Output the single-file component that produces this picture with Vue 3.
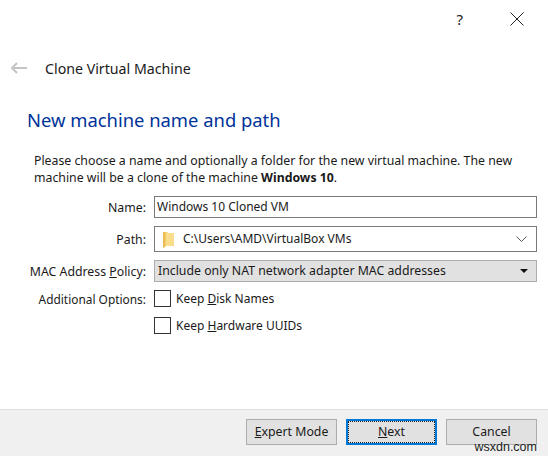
<script setup>
const name = 'Windows 10 Cloned VM'
const path = 'C:\\Users\\AMD\\VirtualBox VMs'
</script>

<template>
  <div class="dialog">
    <div class="titlebar">
      <span class="help">?</span>
      <svg class="close" width="14" height="14" viewBox="0 0 14 14">
        <path d="M0.5 0.5L13.5 13.5M13.5 0.5L0.5 13.5" stroke="#222" stroke-width="1" fill="none" />
      </svg>
    </div>

    <div class="header">
      <svg class="back" width="18" height="12" viewBox="0 0 18 12">
        <path d="M17 6H2M7 1L2 6L7 11" stroke="#c4c4c4" stroke-width="2" fill="none" />
      </svg>
      <span class="caption">Clone Virtual Machine</span>
    </div>

    <div class="content">
      <h1>New machine name and path</h1>
      <p class="intro">
        Please choose a name and optionally a folder for the new virtual machine. The new
        machine will be a clone of the machine <b>Windows 10</b>.
      </p>

      <div class="form">
        <label class="lbl">Name:</label>
        <div class="edit">{{ name }}</div>

        <label class="lbl">Path:</label>
        <div class="pathbox">
          <svg class="folder" width="14" height="17" viewBox="0 0 14 17">
            <path d="M1 1H5L6 2H12V15H4L1 17Z" fill="#f3cd6c" />
            <path d="M4 2H12V15H4Z" fill="#f9dc8c" />
            <path d="M1 1H3V16L1 17Z" fill="#e9bd52" />
          </svg>
          <span class="pathtext">{{ path }}</span>
          <svg class="chev" width="11" height="6" viewBox="0 0 11 6">
            <path d="M0.5 0.5L5.5 5.5L10.5 0.5" stroke="#555" fill="none" />
          </svg>
        </div>

        <label class="lbl">MAC Address <u>P</u>olicy:</label>
        <div class="combo">
          <span>Include only NAT network adapter MAC addresses</span>
          <i class="caret"></i>
        </div>

        <label class="lbl small">Additional Options:</label>
        <div class="check"><i class="box"></i><span>Keep <u>D</u>isk Names</span></div>

        <span></span>
        <div class="check second"><i class="box"></i><span>Keep <u>H</u>ardware UUIDs</span></div>
      </div>
    </div>

    <div class="footer">
      <button class="btn"><u>E</u>xpert Mode</button>
      <button class="btn primary"><u>N</u>ext</button>
      <button class="btn">Cancel</button>
      <span class="watermark">wsxdn.com</span>
    </div>
  </div>
</template>

<style scoped>
.dialog {
  width: 548px;
  height: 456px;
  display: flex;
  flex-direction: column;
  background: #fff;
  color: #1a1a1a;
  font-family: "Noto Sans", "Open Sans", sans-serif;
  font-size: 12.3px;
  overflow: hidden;
}
.titlebar {
  height: 38px;
  display: flex;
  align-items: center;
  justify-content: flex-end;
  padding-right: 24px;
}
.help { font-size: 15px; margin-right: 47px; }
.header {
  height: 60px;
  display: flex;
  align-items: center;
  padding-left: 10px;
}
.back { margin-right: 17px; }
.caption { font-size: 14.2px; }
.content { flex: 1; padding: 9px 11px 0 26px; }
h1 {
  margin: 0 0 0 1px;
  font-size: 18.4px;
  font-weight: 400;
  line-height: 26px;
  color: #003399;
}
.intro {
  margin: 19px 0 0 8px;
  line-height: 17px;
  width: 505px;
}
.form {
  display: grid;
  grid-template-columns: 120px 383px;
  column-gap: 8px;
  row-gap: 8px;
  margin-top: 10px;
  align-items: center;
}
.lbl { text-align: right; white-space: nowrap; justify-self: end; }
.small { font-size: 11.9px; }
.edit {
  height: 22px;
  box-sizing: border-box;
  border: 1px solid #7a7a7a;
  padding: 0 2px;
  line-height: 20px;
  font-size: 12px;
}
.pathbox {
  height: 26px;
  box-sizing: border-box;
  border: 1px solid #7a7a7a;
  display: flex;
  align-items: center;
  padding: 0 9px 0 7px;
  font-size: 12px;
}
.pathtext { flex: 1; margin-left: 7px; padding-bottom: 2px; }
.combo {
  height: 22px;
  box-sizing: border-box;
  border: 1px solid #adadad;
  background: #e1e1e1;
  display: flex;
  align-items: center;
  justify-content: space-between;
  padding: 0 8px 2px 3px;
}
.caret {
  border-left: 4px solid transparent;
  border-right: 4px solid transparent;
  border-top: 4px solid #111;
  margin-top: 2px;
}
.check { display: flex; align-items: center; height: 17px; font-size: 12px; }
.second { margin-top: 2px; }
.box {
  width: 15px;
  height: 15px;
  border: 1px solid #333;
  margin-right: 5px;
}
.footer {
  position: relative;
  height: 47px;
  box-sizing: border-box;
  border-top: 1px solid #dfdfdf;
  background: #f0f0f0;
  display: flex;
  justify-content: flex-end;
  gap: 9px;
  padding: 9px 11px 0 0;
}
.btn {
  width: 91px;
  height: 26px;
  box-sizing: border-box;
  border: 1px solid #adadad;
  background: #e1e1e1;
  color: #1a1a1a;
  font: inherit;
  padding: 0 0 1px;
}
.primary {
  border: 2px solid #0078d7;
  outline: 1px dotted #222;
  outline-offset: -3px;
}
.watermark {
  position: absolute;
  right: 11px;
  top: 30px;
  font-family: "Liberation Sans", sans-serif;
  font-size: 12.5px;
  color: #222;
  line-height: 14px;
}
</style>
